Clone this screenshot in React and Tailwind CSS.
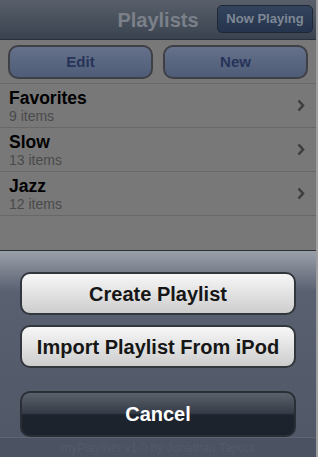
export default function App() {
  const rows = [
    { t: "Favorites", s: "9 items" },
    { t: "Slow", s: "13 items" },
    { t: "Jazz", s: "12 items" },
  ];
  const Chevron = () => (
    <svg width="8" height="13" viewBox="0 0 8 13" className="mr-[11px]">
      <path d="M1.5 1.5 L6 6.5 L1.5 11.5" fill="none" stroke="#3e3e3e" strokeWidth="2.6" />
    </svg>
  );
  return (
    <div className="w-[318px] h-[457px] flex bg-[#9e9e9e] overflow-hidden" style={{ fontFamily: '"Liberation Sans", Arial, sans-serif' }}>
      <div className="w-[316px] h-[457px] flex flex-col">
        {/* nav bar */}
        <div className="h-[40px] flex items-center relative bg-gradient-to-b from-[#585f6a] to-[#39434f] border-b border-[#2a2f38]">
          <div className="flex-1 text-center text-[20px] font-bold text-[#7b8089] leading-none">Playlists</div>
          <div className="absolute right-[3px] top-[5px] w-[96px] h-[28px] rounded-[5px] border border-[#1f2735] bg-gradient-to-b from-[#34445e] to-[#25344c] flex items-center justify-center text-[13px] font-bold text-[#7f8895]">
            Now Playing
          </div>
        </div>
        {/* list region */}
        <div className="flex-1 bg-[#787878] flex flex-col">
          <div className="h-[44px] flex gap-[10px] px-[8px] pt-[5px] border-b border-[#6a6a6a]">
            <div className="flex-1 h-[34px] rounded-[10px] border-2 border-[#3f4045] bg-gradient-to-b from-[#65718a] to-[#4f5c77] flex items-center justify-center text-[15px] font-bold text-[#263459]">Edit</div>
            <div className="flex-1 h-[34px] rounded-[10px] border-2 border-[#3f4045] bg-gradient-to-b from-[#65718a] to-[#4f5c77] flex items-center justify-center text-[15px] font-bold text-[#263459]">New</div>
          </div>
          {rows.map((r) => (
            <div key={r.t} className="h-[44px] flex items-center border-b border-[#686868]">
              <div className="flex-1 pl-[9px] flex flex-col">
                <div className="text-[17.5px] font-bold text-black leading-[20px]">{r.t}</div>
                <div className="text-[14px] text-[#4a4a4a] leading-[16px]">{r.s}</div>
              </div>
              <Chevron />
            </div>
          ))}
        </div>
        {/* action sheet */}
        <div className="h-[207px] flex flex-col border-t border-[#2c2f36] bg-gradient-to-b from-[#9aa0aa] via-[#596070] via-[20%] to-[#4f5665]">
          <div className="flex flex-col px-[20px] pt-[21px]">
            <div className="h-[43px] rounded-[10px] border-2 border-[#32363d] bg-gradient-to-b from-[#f7f7f7] via-[#e2e2e2] via-50% to-[#cdcdcd] flex items-center justify-center text-[20px] font-bold text-[#161616]">Create Playlist</div>
            <div className="h-[43px] mt-[10px] rounded-[10px] border-2 border-[#32363d] bg-gradient-to-b from-[#f7f7f7] via-[#e2e2e2] via-50% to-[#cdcdcd] flex items-center justify-center text-[20px] font-bold text-[#161616]">Import Playlist From iPod</div>
            <div className="h-[46px] mt-[23px] rounded-[10px] border-2 border-[#2a2e35] bg-[linear-gradient(to_bottom,#5b616b_0%,#363c47_48%,#1e242e_52%,#1c222c_100%)] flex items-center justify-center text-[20px] font-bold text-white">Cancel</div>
          </div>
          <div className="mt-auto h-[21px] bg-[#4b5262] border-t border-[#5e6472] flex items-center justify-center text-[12px] text-[#535a69]">myPlaylists v1.0 by Jonathan Tapout</div>
        </div>
      </div>
    </div>
  );
}
